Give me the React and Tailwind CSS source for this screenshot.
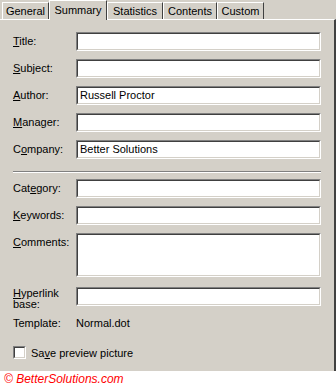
import React from 'react';

const font = { fontFamily: '"Liberation Sans", Arial, sans-serif' };

function Field({ value, h = 'h-[19px]' }) {
    return (
        <div className={`w-[245px] ${h} border border-t-[#808080] border-l-[#808080] border-b-white border-r-white`}>
            <div className="w-full h-full bg-white border border-t-[#404040] border-l-[#404040] border-b-[#d4d0c8] border-r-[#d4d0c8] px-[2px] text-[11px] leading-[15px] text-black">
                {value}
            </div>
        </div>
    );
}

function Label({ pre, key_, post }) {
    return (
        <span className="text-[11px] text-black">
            {pre}<u>{key_}</u>{post}
        </span>
    );
}

function Row({ label, value, mt, h }) {
    return (
        <div className={`flex items-start ${mt}`}>
            <div className="w-[63px] h-[19px] flex items-center">{label}</div>
            <Field value={value} h={h} />
        </div>
    );
}

function Tab({ label, w, selected }) {
    if (selected) {
        return (
            <div className={`${w} h-[20px] -mb-px relative z-10 bg-[#d4d0c8] border-t border-l border-t-white border-l-white border-r border-r-[#404040] flex items-start justify-center pt-[1px] text-[11px] text-black`}>
                {label}
            </div>
        );
    }
    return (
        <div className={`${w} h-[17px] bg-[#d4d0c8] border-t border-l border-t-white border-l-white border-r border-r-[#404040] flex items-center justify-center text-[11px] text-black`}>
            {label}
        </div>
    );
}

export default function App() {
    return (
        <div className="w-[336px] h-[387px] bg-white flex flex-col overflow-hidden" style={font}>
            <div className="h-[371px] shrink-0 bg-[#d4d0c8] flex flex-col overflow-hidden">
                {/* tabs */}
                <div className="h-[19px] shrink-0 flex items-end pl-[2px]">
                    <Tab label="General" w="w-[47px]" />
                    <Tab label="Summary" w="w-[58px]" selected />
                    <Tab label="Statistics" w="w-[56px]" />
                    <Tab label="Contents" w="w-[54px]" />
                    <Tab label="Custom" w="w-[47px]" />
                </div>

                {/* panel */}
                <div className="flex-1 w-[336px] border-t border-t-white border-r-2 border-r-[#404040] pl-[13px] flex flex-col">
                    <Row mt="mt-[12px]" label={<Label key_="T" post="itle:" />} />
                    <Row mt="mt-[8px]" label={<Label key_="S" post="ubject:" />} />
                    <Row mt="mt-[8px]" label={<Label key_="A" post="uthor:" />} value="Russell Proctor" />
                    <Row mt="mt-[8px]" label={<Label key_="M" post="anager:" />} />
                    <Row mt="mt-[8px]" label={<Label pre="C" key_="o" post="mpany:" />} value="Better Solutions" />

                    <div className="mt-[12px] w-[308px] border-t border-t-[#808080] border-b border-b-white" />

                    <Row mt="mt-[6px]" label={<Label pre="Cat" key_="e" post="gory:" />} />
                    <Row mt="mt-[8px]" label={<Label key_="K" post="eywords:" />} />
                    <Row mt="mt-[8px]" h="h-[44px]" label={<Label key_="C" post="omments:" />} />

                    <div className="flex items-start mt-[10px] h-[19px]">
                        <div className="w-[63px] text-[11px] leading-[11px] text-black pt-[1px]">
                            <u>H</u>yperlink<br />base:
                        </div>
                        <Field />
                    </div>

                    <div className="flex items-center mt-[9px] h-[16px] text-[11px] text-black">
                        <div className="w-[63px]">Template:</div>
                        <div>Normal.dot</div>
                    </div>

                    <div className="flex items-center mt-[15px] h-[13px] gap-[5px] text-[11px] text-black">
                        <div className="w-[13px] h-[13px] border border-t-[#808080] border-l-[#808080] border-b-white border-r-white">
                            <div className="w-full h-full bg-white border border-t-[#404040] border-l-[#404040] border-b-[#d4d0c8] border-r-[#d4d0c8]" />
                        </div>
                        <span className="pt-[2px]">Sa<u>v</u>e preview picture</span>
                    </div>
                </div>
            </div>
            <div className="h-[16px] shrink-0 pl-[4px] flex items-center text-[12px] italic text-[#ff0000]">
                © BetterSolutions.com
            </div>
        </div>
    );
}
